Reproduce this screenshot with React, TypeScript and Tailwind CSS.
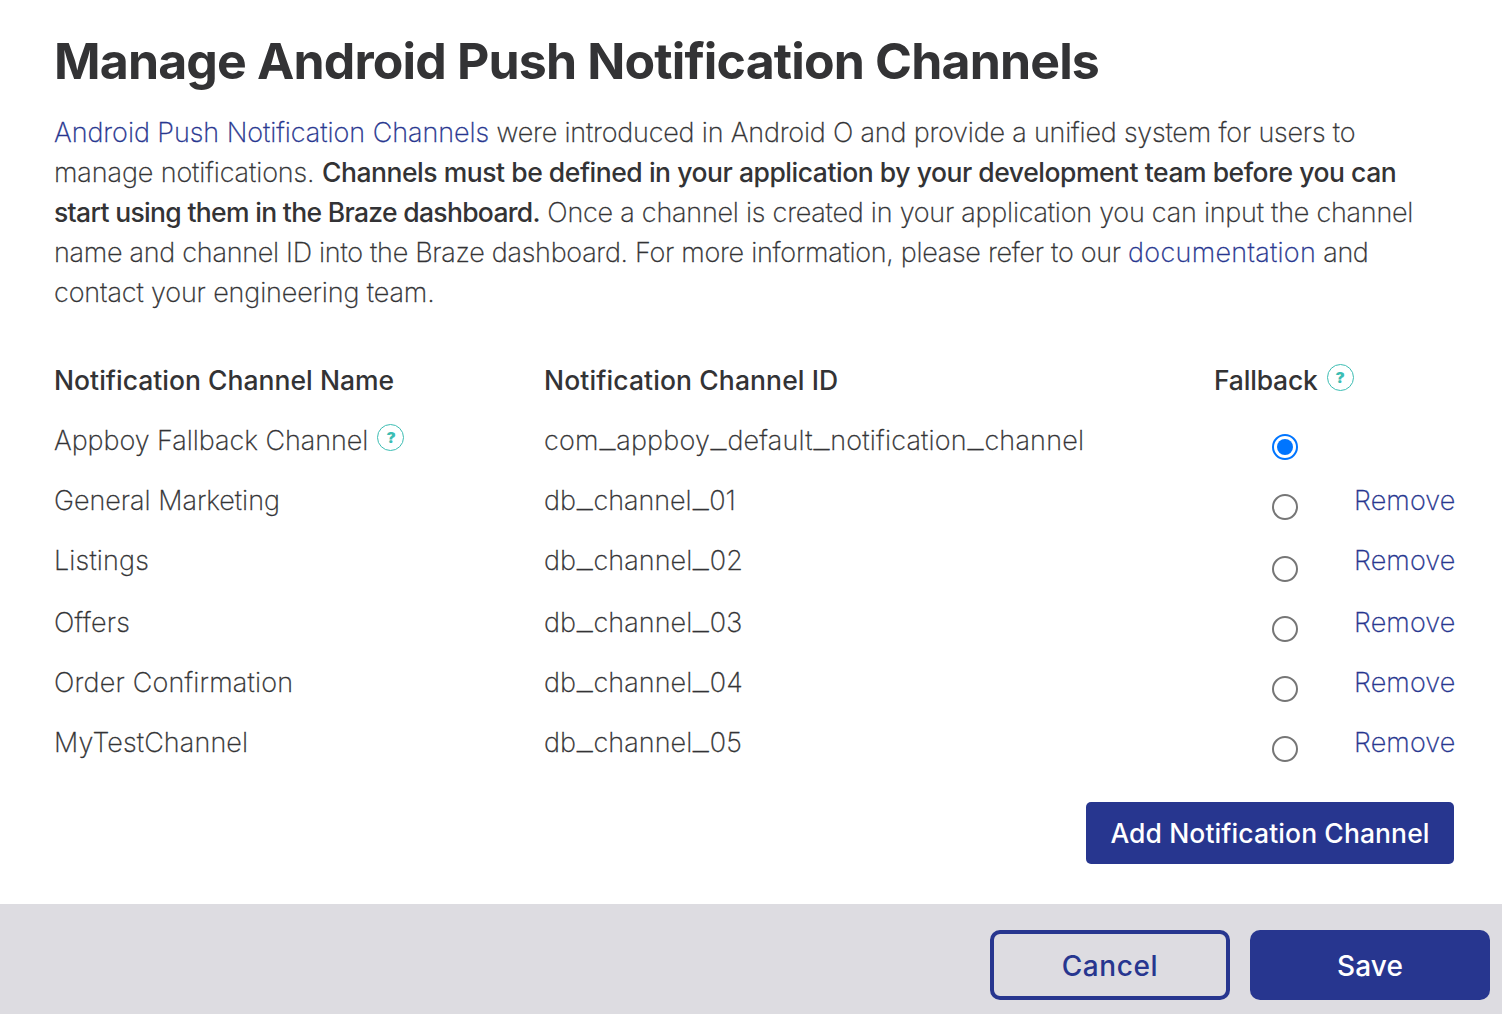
import { Fragment } from "react";

const channels = [
  { name: "Appboy Fallback Channel", id: "com_appboy_default_notification_channel", locked: true, track: "tracking-[-0.04px]", idTrack: "tracking-[0.2px]", height: "h-[60px]", radio: "pt-[13px]" },
  { name: "General Marketing", id: "db_channel_01", locked: false, track: "tracking-[-0.02px]", idTrack: "tracking-[-0.02px]", height: "h-[60px]", radio: "pt-[13px]" },
  { name: "Listings", id: "db_channel_02", locked: false, track: "tracking-[0.16px]", idTrack: "tracking-[0.05px]", height: "h-[62px]", radio: "pt-[15px]" },
  { name: "Offers", id: "db_channel_03", locked: false, track: "tracking-[0.2px]", idTrack: "tracking-[0.05px]", height: "h-[60px]", radio: "pt-[13px]" },
  { name: "Order Confirmation", id: "db_channel_04", locked: false, track: "tracking-[0.2px]", idTrack: "tracking-[0.05px]", height: "h-[60px]", radio: "pt-[13px]" },
  { name: "MyTestChannel", id: "db_channel_05", locked: false, track: "tracking-[0.12px]", idTrack: "tracking-[0.05px]", height: "h-[60px]", radio: "pt-[13px]" },
];

function Help({ className }: { className: string }) {
  return (
    <span className={`flex size-[27px] shrink-0 items-center justify-center rounded-full border border-[#3cbdb3] text-[14px] leading-none font-black tracking-normal text-[#3cbdb3] [-webkit-text-stroke:0px] ${className}`}>
      <span className="scale-x-110">?</span>
    </span>
  );
}

function ChannelId({ value, className }: { value: string; className: string }) {
  return (
    <span className={className}>
      {value.split("_").map((part, i) => (
        <Fragment key={i}>
          {i > 0 && <span className="relative -top-px inline-block w-[17.5px] scale-x-135 text-center leading-none">_</span>}
          {part}
        </Fragment>
      ))}
    </span>
  );
}

function Radio({ checked }: { checked: boolean }) {
  return checked ? (
    <span className="flex size-[26px] items-center justify-center rounded-full border-2 border-[#0075ff]">
      <span className="size-[16px] rounded-full bg-[#0075ff]" />
    </span>
  ) : (
    <span className="block size-[26px] rounded-full border-2 border-[#767676]" />
  );
}

export default function App() {
  return (
    <div className="flex h-[1014px] w-[1502px] flex-col bg-white font-['Inter',sans-serif] text-[27px] leading-[40px] font-extralight text-[#333335]">
      <main className="flex h-[904px] flex-col pr-[48px] pl-[54px] pt-[30px] whitespace-nowrap">
        <h1 className="text-[50px] leading-[62px] font-bold tracking-[-0.85px]">Manage Android Push Notification Channels</h1>
        <p className="mt-[21px] h-[200px] whitespace-pre [-webkit-text-stroke:0.3px]">
          <a className="tracking-[-0.05px] text-[#27368f]">Android Push Notification Channels</a>
          <span className="tracking-[-0.19px]"> were introduced in Android O and provide a unified system for users to</span>
          <br />
          <span className="tracking-[-0.11px]">manage notifications. </span>
          <b className="text-[26.5px] leading-none font-medium tracking-[-0.46px] [-webkit-text-stroke:0px]">Channels must be defined in your application by your development team before you can</b>
          <br />
          <b className="text-[26.5px] leading-none font-medium tracking-[-0.68px] [-webkit-text-stroke:0px]">start using them in the Braze dashboard.</b>
          <span className="tracking-[-0.23px]"> Once a channel is created in your application you can input the channel</span>
          <br />
          <span className="tracking-[-0.28px]">name and channel ID into the Braze dashboard. For more information, please refer to our </span>
          <a className="tracking-[0.29px] text-[#27368f]">documentation</a>
          <span className="tracking-[-0.4px]"> and</span>
          <br />
          <span className="tracking-[-0.13px]">contact your engineering team.</span>
        </p>
        <div className="mt-[47px] grid h-[61px] grid-cols-[490px_670px_1fr] text-[26.5px] font-[550]">
          <span className="tracking-[0.02px]">Notification Channel Name</span>
          <span className="tracking-[0.11px]">Notification Channel ID</span>
          <span className="flex tracking-[-0.2px]">
            Fallback
            <Help className="ml-[9px] mt-[4px]" />
          </span>
        </div>
        {channels.map((c) => (
          <div key={c.id} className={`grid grid-cols-[490px_728px_82px_1fr] [-webkit-text-stroke:0.3px] ${c.height}`}>
            <span className={`flex ${c.track}`}>
              {c.name}
              {c.locked && <Help className="ml-[9px] mt-[3px]" />}
            </span>
            <ChannelId value={c.id} className={c.idTrack} />
            <span className={c.radio}>
              <Radio checked={c.locked} />
            </span>
            {!c.locked && <a className="tracking-[0.1px] text-[#27368f]">Remove</a>}
          </div>
        ))}
        <button className="mt-[19px] h-[62px] w-[368px] shrink-0 self-end rounded-[5px] bg-[#27368f] text-[26.5px] font-medium tracking-[0.1px] text-white">
          Add Notification Channel
        </button>
      </main>
      <footer className="flex h-[110px] justify-end gap-5 bg-[#dddce1] pt-[26px] pr-3 text-[28px] font-medium">
        <button className="h-[70px] w-[240px] rounded-[10px] border-4 border-[#27368f] pt-[2px] tracking-[0.6px] text-[#27368f]">Cancel</button>
        <button className="h-[70px] w-[240px] rounded-[10px] bg-[#27368f] pt-[2px] tracking-[0.1px] text-white">Save</button>
      </footer>
    </div>
  );
}
